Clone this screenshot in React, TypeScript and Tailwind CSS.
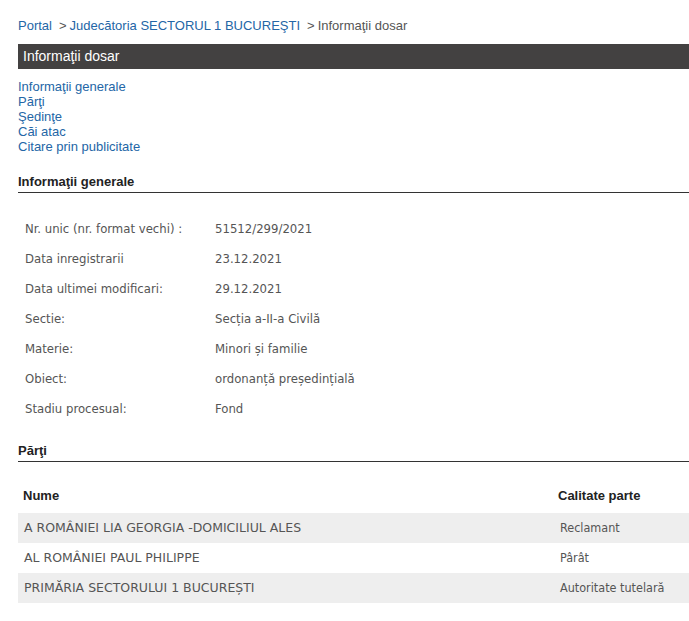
import React from "react";

const info: [string, string][] = [
  ["Nr. unic (nr. format vechi) :", "51512/299/2021"],
  ["Data inregistrarii", "23.12.2021"],
  ["Data ultimei modificari:", "29.12.2021"],
  ["Sectie:", "Secția a-II-a Civilă"],
  ["Materie:", "Minori și familie"],
  ["Obiect:", "ordonanță președințială"],
  ["Stadiu procesual:", "Fond"],
];

const parti: [string, string][] = [
  ["A ROMÂNIEI LIA GEORGIA -DOMICILIUL ALES", "Reclamant"],
  ["AL ROMÂNIEI PAUL PHILIPPE", "Pârât"],
  ["PRIMĂRIA SECTORULUI 1 BUCUREȘTI", "Autoritate tutelară"],
];

export default function App() {
  return (
    <div className="w-[689px] min-h-[621px] bg-white pl-[18px] font-['Liberation_Sans',Arial,sans-serif]">
      <div className="pt-[18px] text-[13px] leading-[15px] text-[#555]">
        <span className="text-[#2466a6]">Portal</span>
        <span className="ml-[7px]">&gt;</span>
        <span className="ml-[3px] text-[#2466a6]">Judecătoria SECTORUL 1 BUCUREŞTI</span>
        <span className="ml-[7px]">&gt;</span>
        <span className="ml-[3px]">Informaţii dosar</span>
      </div>

      <div className="mt-[11px] h-[25px] bg-[#434141] pl-[5px] text-[14px] leading-[25px] text-white">
        Informaţii dosar
      </div>

      <div className="mt-[10px] flex flex-col text-[13px] leading-[15px] text-[#2466a6]">
        <span>Informaţii generale</span>
        <span>Părţi</span>
        <span>Şedinţe</span>
        <span>Căi atac</span>
        <span>Citare prin publicitate</span>
      </div>

      <div className="mt-[20px] border-b border-[#333] pb-[3px] text-[13px] font-bold leading-[15px] text-[#222]">
        Informaţii generale
      </div>

      <div className="mt-[21px] flex flex-col font-['DejaVu_Sans_Condensed','DejaVu_Sans',sans-serif] text-[13px] text-[#555]">
        {info.map(([k, v]) => (
          <div key={k} className="flex h-[30px] items-center">
            <span className="w-[197px] pl-[7px]">{k}</span>
            <span>{v}</span>
          </div>
        ))}
      </div>

      <div className="mt-[19px] border-b border-[#333] pb-[3px] text-[13px] font-bold leading-[15px] text-[#222]">
        Părţi
      </div>

      <div className="flex pt-[26px] pb-[10px] text-[13px] font-bold leading-[15px] text-[#222]">
        <span className="w-[540px] pl-[5px]">Nume</span>
        <span>Calitate parte</span>
      </div>

      <div className="flex flex-col text-[#555]">
        {parti.map(([n, c], i) => (
          <div key={n} className={`flex h-[30px] items-center ${i % 2 === 0 ? "bg-[#eeeeee]" : "bg-white"}`}>
            <span className="w-[542px] pl-[6px] font-['DejaVu_Sans',sans-serif] text-[12.5px]">{n}</span>
            <span className="font-['DejaVu_Sans_Condensed','DejaVu_Sans',sans-serif] text-[12.5px]">{c}</span>
          </div>
        ))}
      </div>
    </div>
  );
}
